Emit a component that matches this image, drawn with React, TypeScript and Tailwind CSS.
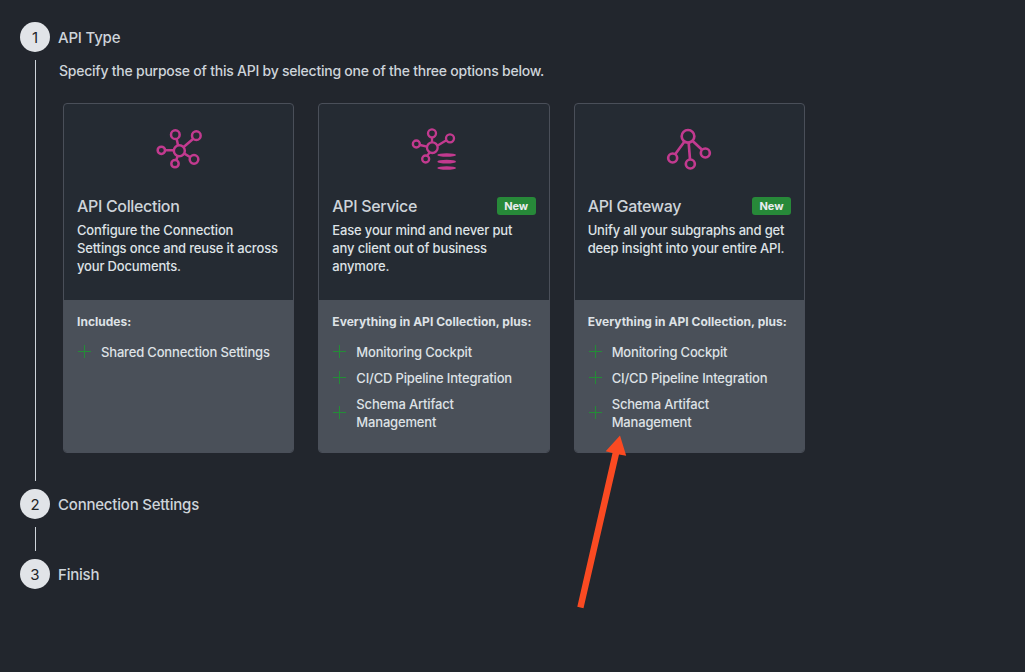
import React from "react";

type Node = [number, number, number];

interface Card {
  title: string;
  isNew: boolean;
  description: string[];
  heading: string;
  features: string[][];
  icon: React.ReactNode;
}

function Nodes({ items }: { items: Node[] }) {
  return (
    <>
      {items.map(([x, y, r]) => (
        <circle key={`${x}-${y}`} cx={x} cy={y} r={r} />
      ))}
    </>
  );
}

const svgClass = "block h-[60px] w-[70px]";

const collectionIcon = (
  <svg viewBox="-4 0 210 180" className={svgClass} fill="none" stroke="#c23a8f" strokeWidth="7.5">
    <Nodes items={[[102, 92, 16.5], [90, 44, 13], [153, 47, 13], [48, 91, 11], [89, 131, 11], [146, 118, 13]]} />
    <path d="M94 56 98 76M143 57 115 81M59 91H86M93 120 97 108M117 101 134 111" />
  </svg>
);

const serviceIcon = (
  <svg viewBox="-3 -1 210 180" className={svgClass} fill="none" stroke="#c23a8f" strokeWidth="7">
    <Nodes items={[[97, 82, 16], [96, 39, 12], [150, 54, 12], [49, 71, 10.5], [77, 116, 10.5]]} />
    <path d="M96 51V66M139 60 112 76M60 74 81 79M82 106 89 96" />
    <g fill="#c23a8f" stroke="none">
      <ellipse cx="140" cy="104" rx="28" ry="5.5" />
      <ellipse cx="140" cy="124" rx="28" ry="5.5" />
      <ellipse cx="140" cy="143" rx="28" ry="5.5" />
    </g>
  </svg>
);

const gatewayIcon = (
  <svg viewBox="-3 -1 210 180" className={svgClass} fill="none" stroke="#c23a8f" strokeWidth="8">
    <Nodes items={[[99, 48, 19], [53, 113, 13.5], [106, 131, 13.5], [151, 98, 13.5]]} />
    <path d="M88 64 61 101M101 67 105 117M113 62 141 88" />
  </svg>
);

const plusFeatures = [["Monitoring Cockpit"], ["CI/CD Pipeline Integration"], ["Schema Artifact", "Management"]];

const cards: Card[] = [
  {
    title: "API Collection",
    isNew: false,
    description: ["Configure the Connection", "Settings once and reuse it across", "your Documents."],
    heading: "Includes:",
    features: [["Shared Connection Settings"]],
    icon: collectionIcon,
  },
  {
    title: "API Service",
    isNew: true,
    description: ["Ease your mind and never put", "any client out of business", "anymore."],
    heading: "Everything in API Collection, plus:",
    features: plusFeatures,
    icon: serviceIcon,
  },
  {
    title: "API Gateway",
    isNew: true,
    description: ["Unify all your subgraphs and get", "deep insight into your entire API."],
    heading: "Everything in API Collection, plus:",
    features: plusFeatures,
    icon: gatewayIcon,
  },
];

function Lines({ lines }: { lines: string[] }) {
  return (
    <>
      {lines.map((line) => (
        <span key={line} className="block whitespace-nowrap">
          {line}
        </span>
      ))}
    </>
  );
}

function Plus() {
  return (
    <svg viewBox="0 0 13 13" className="mb-[2px] h-[13px] w-[13px] shrink-0" shapeRendering="crispEdges">
      <path d="M0 6.5H13M6.5 0V13" stroke="#248c37" />
    </svg>
  );
}

function OptionCard({ card }: { card: Card }) {
  return (
    <article className="flex h-[350px] min-w-0 flex-1 flex-col overflow-hidden rounded border border-[#4a4f59] bg-[#252b33]">
      <div className="flex h-[196px] shrink-0 flex-col px-[13px] pt-4">
        <div className="flex justify-center">{card.icon}</div>
        <div className="mt-[14px] flex h-6 items-center justify-between">
          <h3 className="text-[16px] font-[550] tracking-[-0.33px] text-[#ced4da]">{card.title}</h3>
          {card.isNew && (
            <span className="flex h-[18px] w-[39px] items-center justify-center rounded-[3px] bg-[#278939] text-[11px] font-bold tracking-[-0.1px] text-[#e9ecef]">
              New
            </span>
          )}
        </div>
        <p className="mt-[3px] text-[13px] leading-[18px] font-[450] tracking-[-0.16px] text-[#dee2e6]">
          <Lines lines={card.description} />
        </p>
      </div>
      <div className="flex-1 bg-[#4a5059] px-[13px] pt-[13px]">
        <h4 className="text-[12px] leading-[18px] font-bold tracking-[0.02px] whitespace-nowrap text-[#dee2e6]">
          {card.heading}
        </h4>
        <ul className="mt-3 flex flex-col gap-2">
          {card.features.map((lines) => (
            <li
              key={lines[0]}
              className="flex items-center gap-[10px] pl-px text-[13px] leading-[18px] font-[450] tracking-[-0.17px] text-[#dee2e6]"
            >
              <Plus />
              <span>
                <Lines lines={lines} />
              </span>
            </li>
          ))}
        </ul>
      </div>
    </article>
  );
}

function StepHeader({ number, label }: { number: number; label: string }) {
  return (
    <div className="flex h-[30px] items-center gap-2">
      <span className="flex size-[30px] items-center justify-center rounded-full bg-[#e1e4e8] pt-[2px] text-[15px] text-[#212529]">
        {number}
      </span>
      <h2 className="pt-[2px] text-[15px] font-[550] tracking-[-0.21px] whitespace-nowrap text-[#ced4da]">{label}</h2>
    </div>
  );
}

export default function App() {
  return (
    <main className="relative h-[672px] w-[1025px] overflow-hidden bg-[#22262d] pt-[22px] pl-5 font-['Inter','Liberation_Sans',sans-serif]">
      <StepHeader number={1} label="API Type" />
      <div className="flex h-[437px] pt-2 pb-2">
        <div className="ml-[15px] w-px shrink-0 bg-[#ced4da]" />
        <div className="ml-[23px]">
          <p className="h-[22px] text-[14px] leading-[22px] font-[450] tracking-[-0.235px] whitespace-nowrap text-[#ced4da]">
            Specify the purpose of this API by selecting one of the three options below.
          </p>
          <div className="mt-[21px] ml-1 flex w-[742px] gap-6">
            {cards.map((card) => (
              <OptionCard key={card.title} card={card} />
            ))}
          </div>
        </div>
      </div>
      <StepHeader number={2} label="Connection Settings" />
      <div className="my-2 ml-[15px] h-6 w-px bg-[#ced4da]" />
      <StepHeader number={3} label="Finish" />

      <svg viewBox="0 0 60 180" className="absolute top-[432px] left-[572px] h-[180px] w-[60px]" fill="#fa4a22">
        <path d="M48 3.5 54.2 23.7 47 22.5 11.5 176.2 5.3 174.8 40.5 21 33.7 19.2Z" />
      </svg>
    </main>
  );
}
